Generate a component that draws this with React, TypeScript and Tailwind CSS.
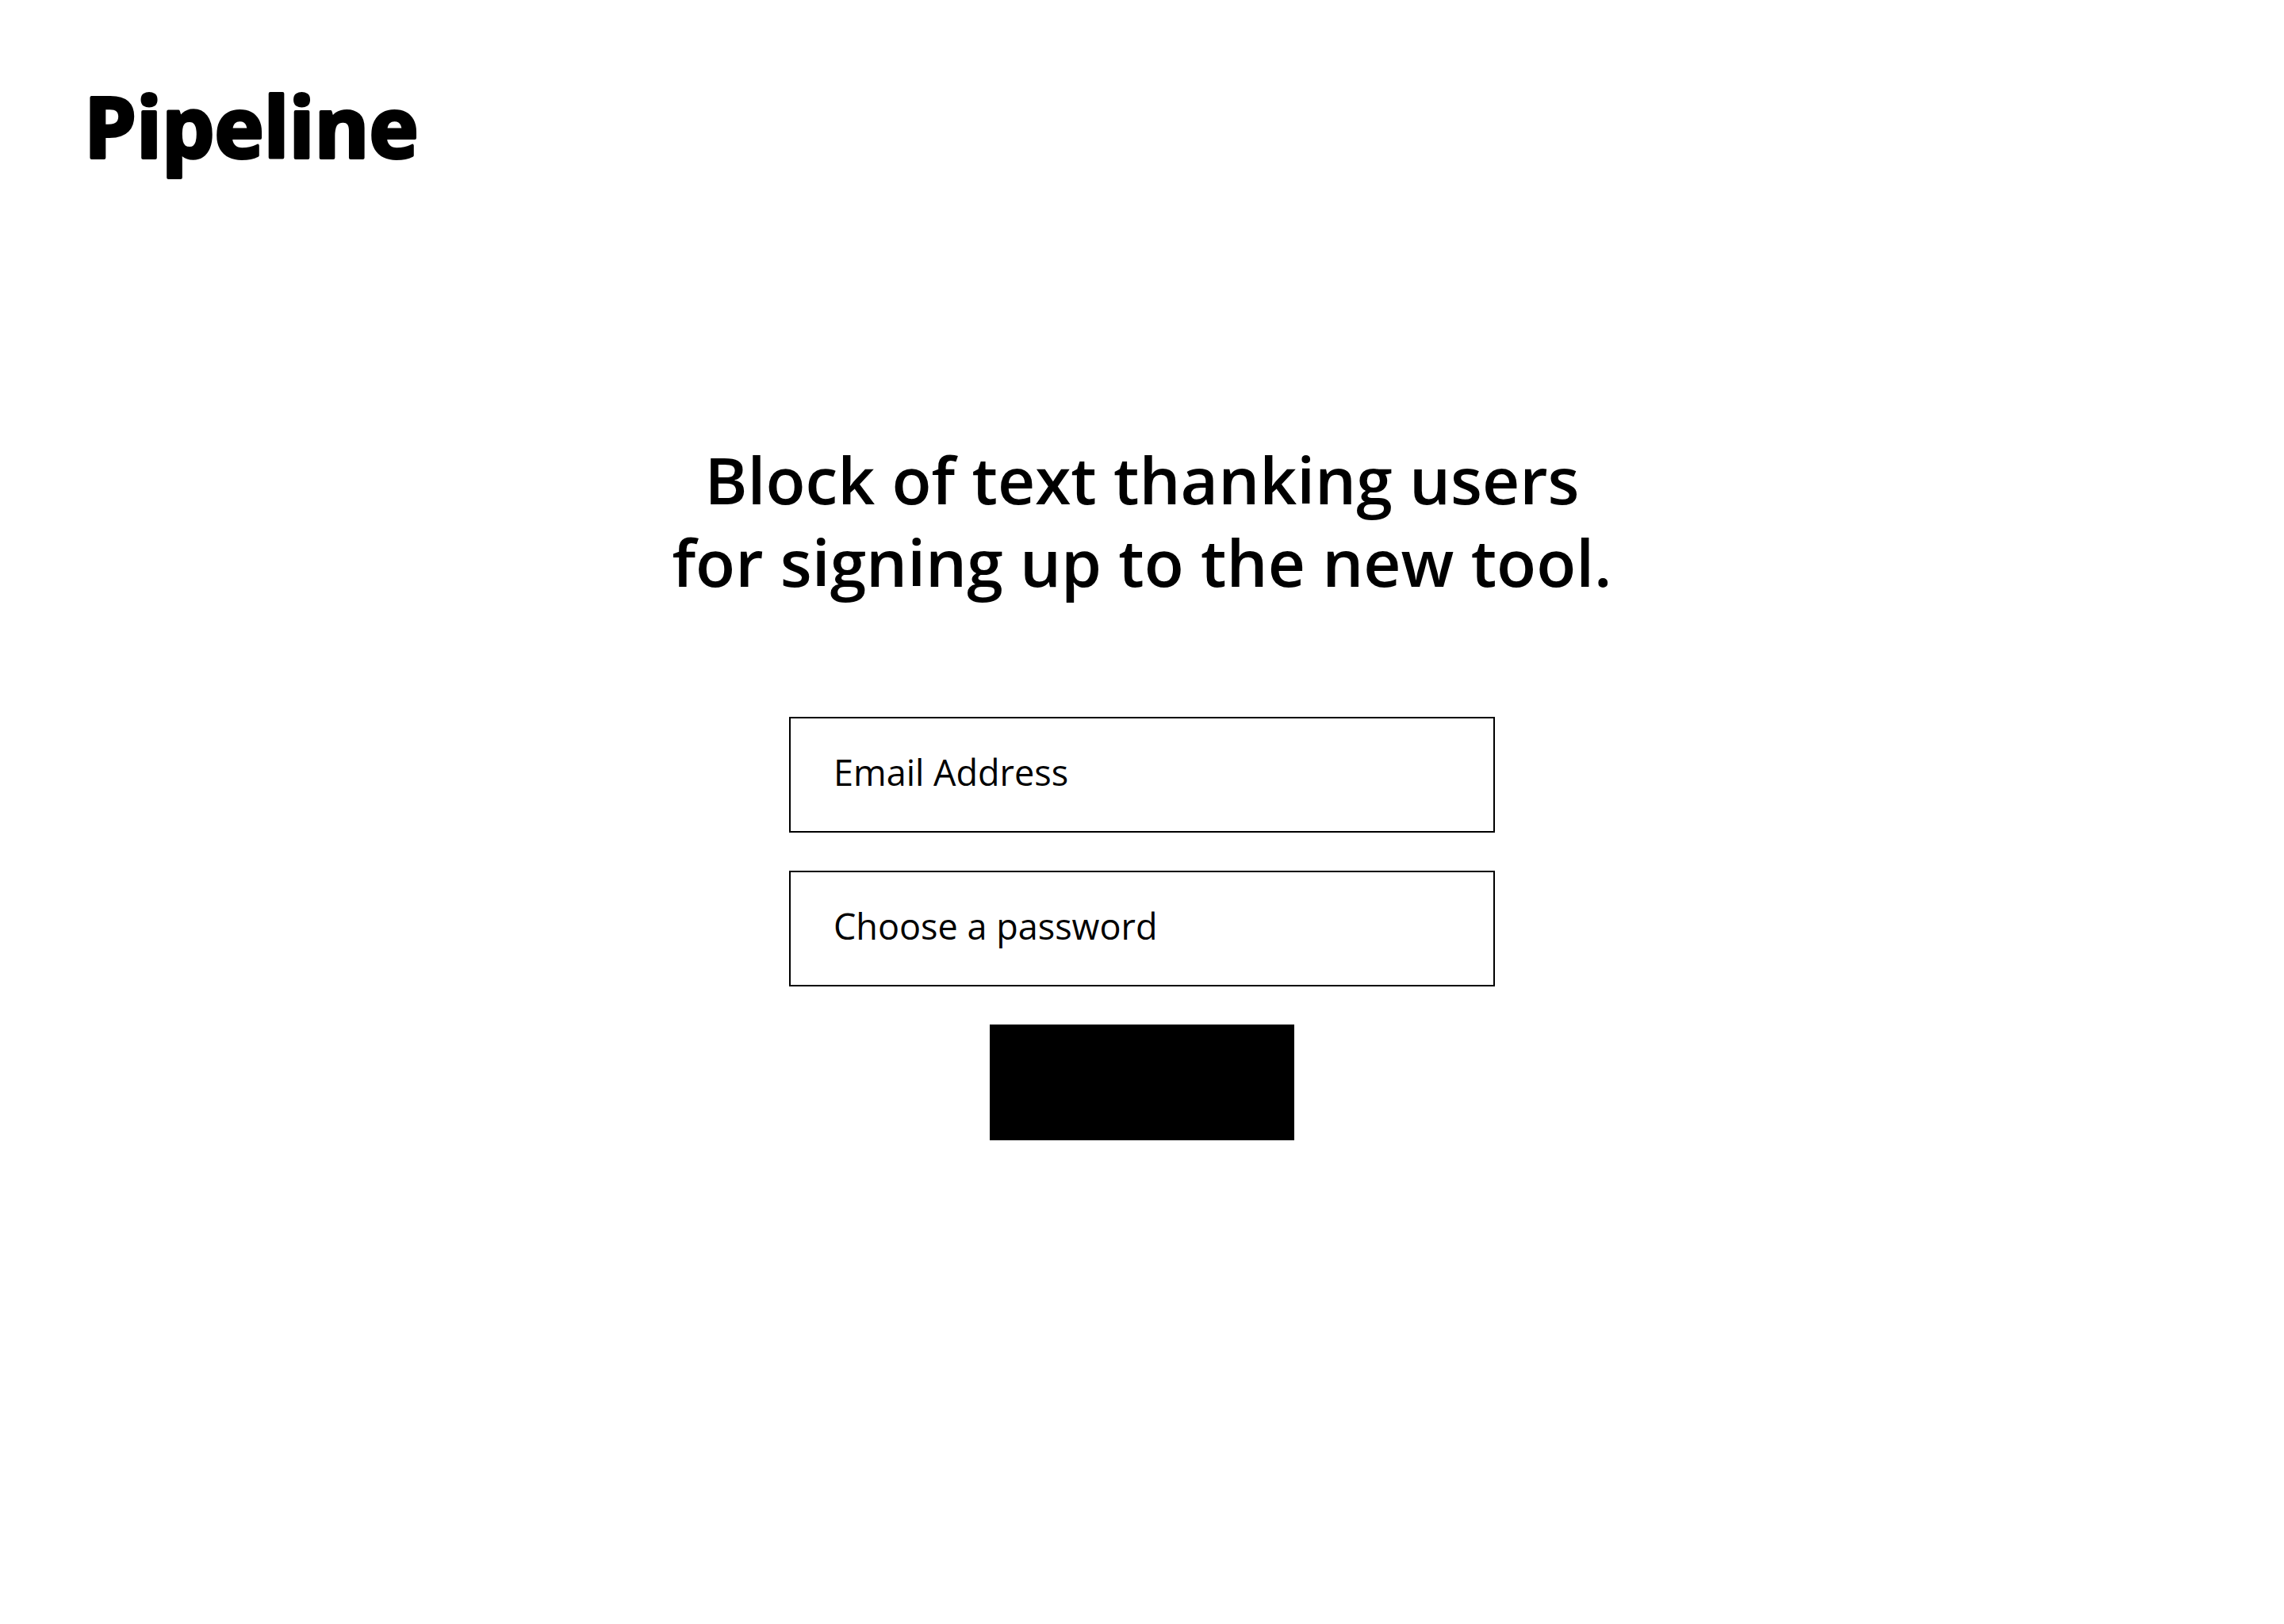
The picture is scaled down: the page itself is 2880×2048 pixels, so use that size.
const fields = [
  { id: 'email', type: 'email', label: 'Email Address', autoComplete: 'email' },
  { id: 'password', type: 'password', label: 'Choose a password', autoComplete: 'new-password' },
];

function Logo() {
  return (
    <svg viewBox="0 0 440 128" className="h-32 w-auto overflow-visible" role="img" aria-label="Pipeline">
      <text
        x="-6"
        y="95"
        className="fill-black stroke-black font-['Open_Sans',sans-serif] text-[105px] font-bold"
        strokeWidth="4"
        strokeLinejoin="round"
      >
        Pipeline
      </text>
    </svg>
  );
}

export default function App() {
  return (
    <div className="min-h-screen bg-white font-['Open_Sans',sans-serif] text-black">
      <header className="flex px-28 pt-26">
        <a href="#">
          <Logo />
        </a>
      </header>
      <main className="mt-80 flex flex-col items-center px-12 pb-48">
        <h1 className="max-w-7xl text-center text-[82px] leading-[104px] font-semibold">
          Block of text thanking users
          <br />
          for signing up to the new tool.
        </h1>
        <form className="mt-36 flex w-full max-w-[890px] flex-col items-center gap-12">
          {fields.map((field) => (
            <input
              key={field.id}
              id={field.id}
              type={field.type}
              aria-label={field.label}
              placeholder={field.label}
              autoComplete={field.autoComplete}
              className="block h-[146px] w-full border-2 border-black bg-white px-[54px] pb-2 text-[45px] text-black placeholder:text-black placeholder:opacity-100"
            />
          ))}
          <button type="submit" aria-label="Sign up" className="h-[146px] w-96 bg-black" />
        </form>
      </main>
    </div>
  );
}
